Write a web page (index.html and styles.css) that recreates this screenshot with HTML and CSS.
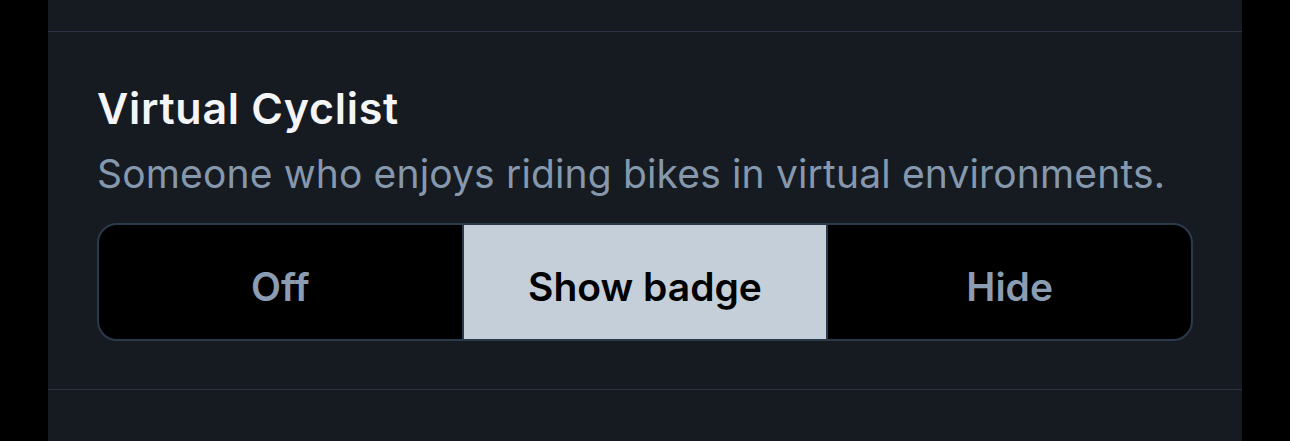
FILE: index.html
```html
<!DOCTYPE html>
<html>
<head>
<meta charset="utf-8">
<link rel="stylesheet" href="styles.css">
</head>
<body>
<div class="panel">
  <div class="top"></div>
  <section class="item">
    <h2 class="title">Virtual Cyclist</h2>
    <p class="desc">Someone who enjoys riding bikes in virtual environments.</p>
    <div class="seg">
      <div class="opt">Off</div>
      <div class="opt active">Show badge</div>
      <div class="opt">Hide</div>
    </div>
  </section>
  <div class="bottom"></div>
</div>
</body>
</html>
```

FILE: styles.css
```css
html, body {
  margin: 0;
  padding: 0;
  background: #000;
  height: 441px;
  overflow: hidden;
}
.panel {
  margin-left: 48px;
  width: 1194px;
  height: 441px;
  background: #161b22;
  font-family: Inter, "Noto Sans", sans-serif;
}
.top {
  height: 31px;
  border-bottom: 1px solid #2a3341;
}
.item {
  padding: 50px 49px 48px;
  border-bottom: 1px solid #2a3341;
}
.title {
  margin: 0;
  font-size: 43px;
  line-height: 52px;
  font-weight: 600;
  letter-spacing: 0.7px;
  color: #f3f5f7;
}
.desc {
  margin: 18px 0 27px;
  font-size: 39px;
  line-height: 44px;
  letter-spacing: 0.15px;
  color: #8598ad;
}
.seg {
  display: flex;
  height: 114px;
  border: 2px solid #2b3a4b;
  border-radius: 20px;
  overflow: hidden;
  background: #000;
}
.opt {
  flex: 1;
  display: flex;
  align-items: center;
  justify-content: center;
  padding-top: 8px;
  font-size: 39px;
  font-weight: 600;
  color: #8b9db2;
}
.opt + .opt {
  border-left: 2px solid #2b3a4b;
}
.opt.active {
  background: #c4cfda;
  color: #000;
}
```
